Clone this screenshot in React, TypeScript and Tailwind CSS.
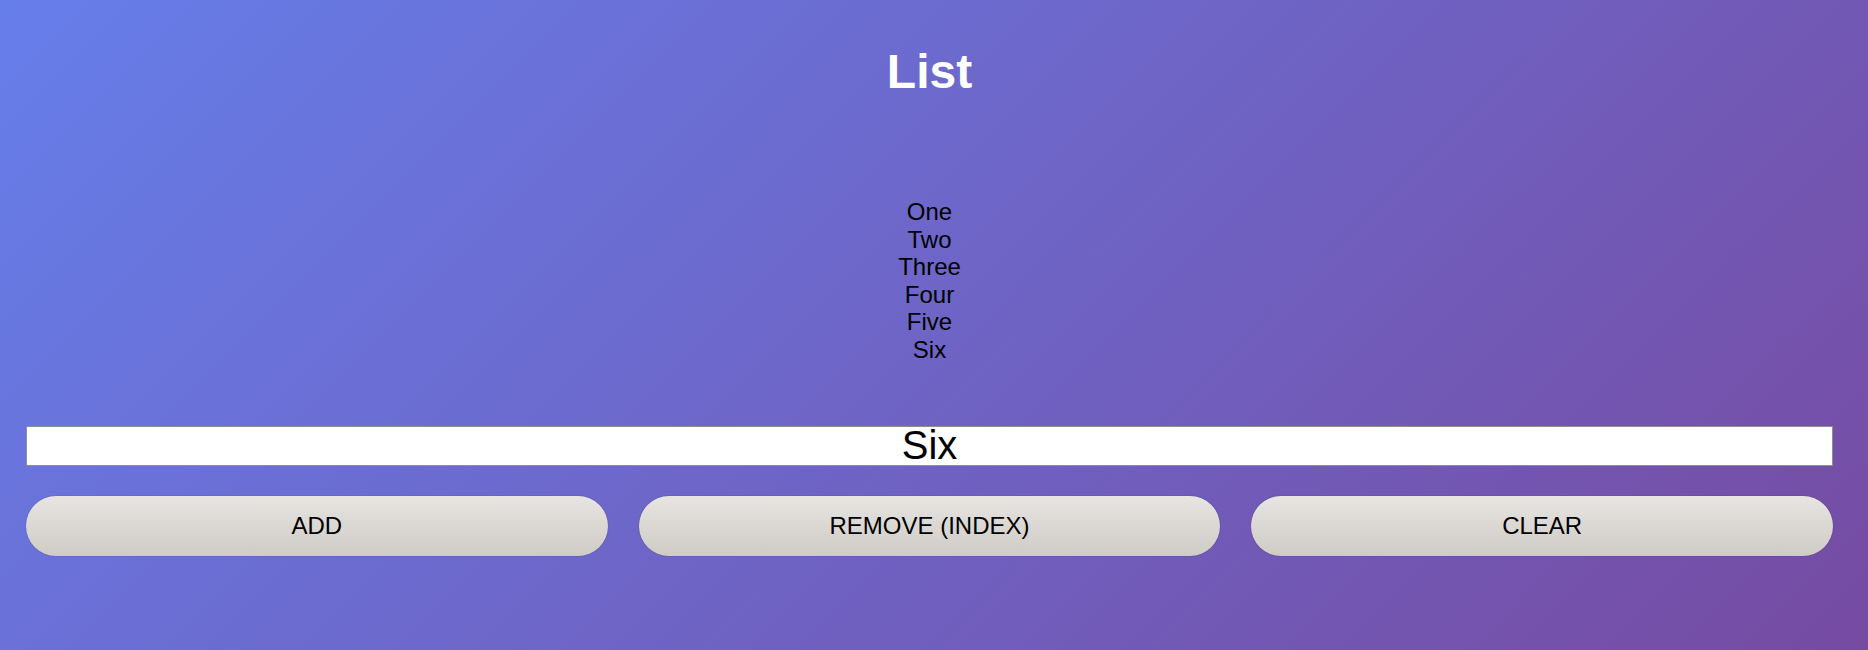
import React, { useState } from 'react';

const initialItems = ['One', 'Two', 'Three', 'Four', 'Five', 'Six'];

export default function App() {
  const [items, setItems] = useState<string[]>(initialItems);
  const [value, setValue] = useState('Six');

  const handleAdd = () => {
    if (value.trim()) setItems([...items, value.trim()]);
  };

  const handleRemove = () => {
    const index = parseInt(value, 10);
    if (!isNaN(index)) setItems(items.filter((_, i) => i !== index));
  };

  const handleClear = () => setItems([]);

  return (
    <div className="min-h-[650px] w-full bg-[linear-gradient(135deg,#667eea_0%,#764ba2_100%)] font-['Liberation_Sans',Arial,sans-serif]">
      <div className="ml-[26px] w-[1807px] pt-[44px]">
        <h1 className="text-center text-[48px] font-bold leading-[55px] text-white">List</h1>

        {/* list */}
        <ul className="mt-[99px] text-center text-[24px] leading-[27.6px] text-black">
          {items.map((item, i) => (
            <li key={i}>{item}</li>
          ))}
        </ul>

        <input
          value={value}
          onChange={(e) => setValue(e.target.value)}
          className="mt-[62px] block h-[40px] w-full border border-[#8f8f8f] bg-white text-center text-[40px] leading-[40px] text-black outline-none"
        />

        {/* buttons */}
        <div className="mt-[30px] grid grid-cols-3 gap-[31px]">
          <button
            onClick={handleAdd}
            className="h-[60px] rounded-full bg-[linear-gradient(to_bottom,#e7e5e2,#cfcbc5)] text-[24px] text-black shadow-[0_0_1px_rgba(0,0,0,0.5)]"
          >
            ADD
          </button>
          <button
            onClick={handleRemove}
            className="h-[60px] rounded-full bg-[linear-gradient(to_bottom,#e7e5e2,#cfcbc5)] text-[24px] text-black shadow-[0_0_1px_rgba(0,0,0,0.5)]"
          >
            REMOVE (INDEX)
          </button>
          <button
            onClick={handleClear}
            className="h-[60px] rounded-full bg-[linear-gradient(to_bottom,#e7e5e2,#cfcbc5)] text-[24px] text-black shadow-[0_0_1px_rgba(0,0,0,0.5)]"
          >
            CLEAR
          </button>
        </div>
      </div>
    </div>
  );
}
